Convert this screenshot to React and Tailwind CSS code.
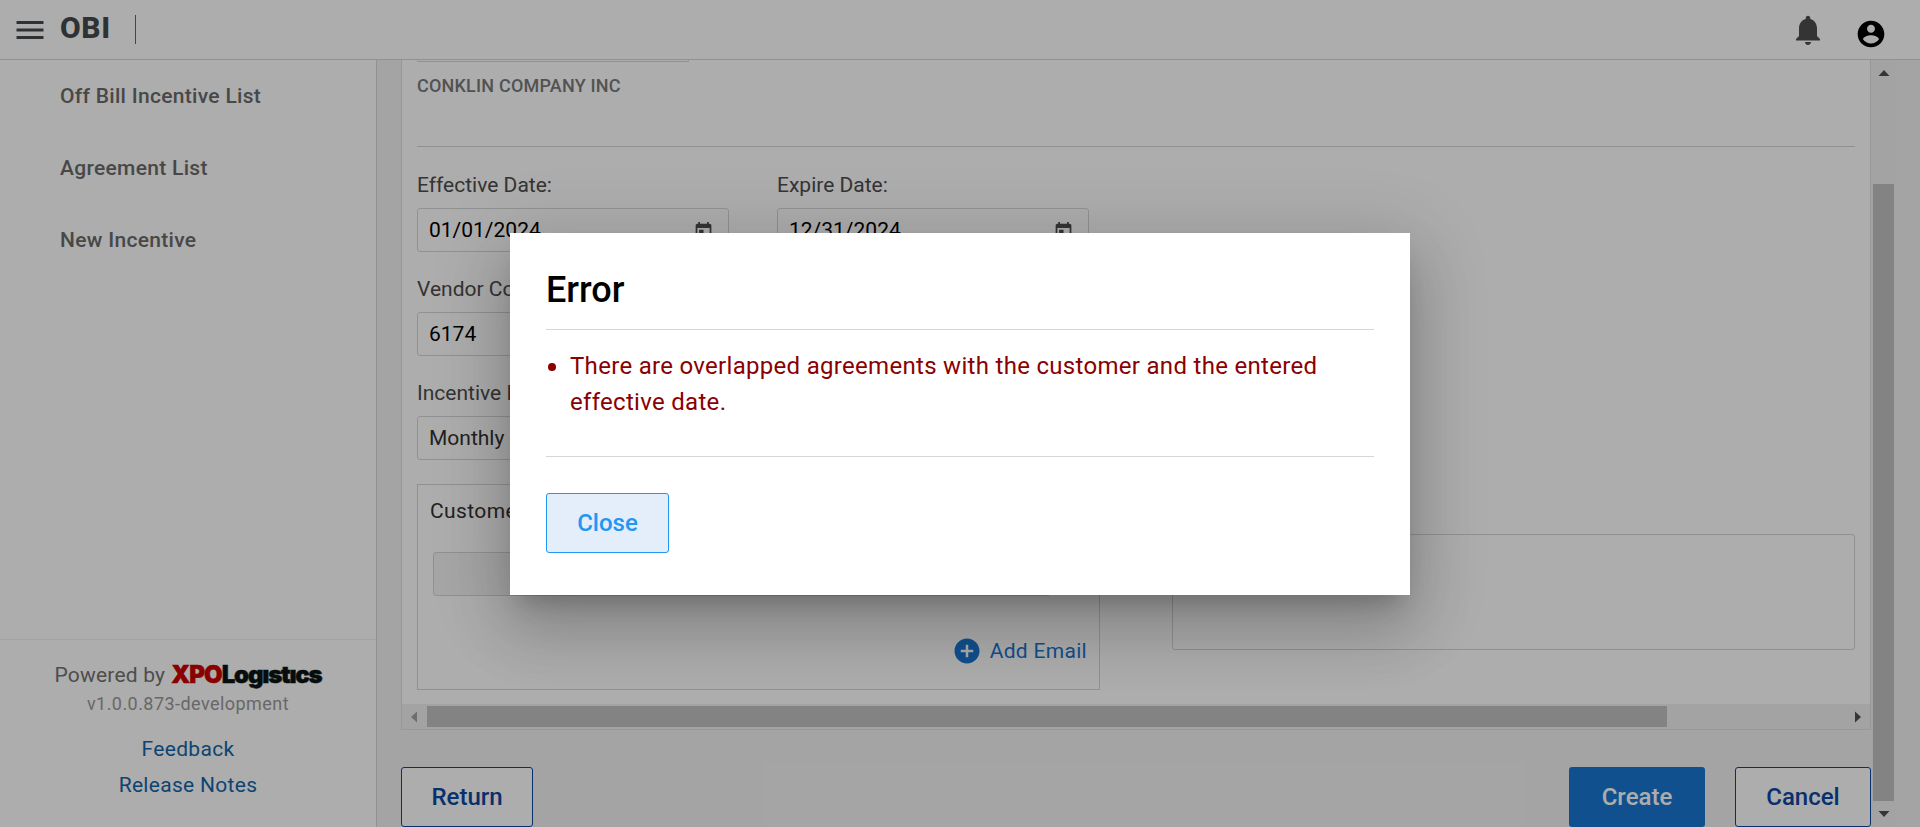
const ROBOTO = "font-['Roboto','Liberation_Sans',sans-serif]";

function Icon({ d, className }) {
  return (
    <svg viewBox="0 0 24 24" fill="currentColor" className={className}>
      <path d={d} />
    </svg>
  );
}

const MENU = "M3 18h18v-2H3v2zm0-5h18v-2H3v2zm0-7v2h18V6H3z";
const BELL =
  "M12 22c1.1 0 2-.9 2-2h-4c0 1.1.89 2 2 2zm6-6v-5c0-3.07-1.64-5.64-4.5-6.32V4c0-.83-.67-1.5-1.5-1.5s-1.5.67-1.5 1.5v.68C7.63 5.36 6 7.92 6 11v5l-2 2v1h16v-1l-2-2z";
const ACCOUNT =
  "M12 2C6.48 2 2 6.48 2 12s4.48 10 10 10 10-4.48 10-10S17.52 2 12 2zm0 3c1.66 0 3 1.34 3 3s-1.34 3-3 3-3-1.34-3-3 1.34-3 3-3zm0 14.2c-2.5 0-4.71-1.28-6-3.22.03-1.99 4-3.08 6-3.08 1.99 0 5.97 1.09 6 3.08-1.29 1.94-3.5 3.22-6 3.22z";
const TODAY =
  "M19 3h-1V1h-2v2H8V1H6v2H5c-1.11 0-1.99.9-1.99 2L3 19c0 1.1.89 2 2 2h14c1.1 0 2-.9 2-2V5c0-1.1-.9-2-2-2zm0 16H5V8h14v11zM7 10h5v5H7z";
const ADD =
  "M12 2C6.48 2 2 6.48 2 12s4.48 10 10 10 10-4.48 10-10S17.52 2 12 2zm5 11h-4v4h-2v-4H7v-2h4V7h2v4h4v2z";

function Field({ label, value, date, className = "", valueClass = "text-black" }) {
  return (
    <div className={`w-[312px] ${className}`}>
      <div className="h-[36px] pt-px text-[21px] leading-[24px] text-[#4d4d4d]">{label}</div>
      <div className="flex h-[44px] items-center justify-between rounded-[3px] border border-[#d6d6d6] pt-[2px] pr-[14px] pl-[11px] text-[21px]">
        <span className={valueClass}>{value}</span>
        {date && <Icon d={TODAY} className="size-[21px] text-[#4d4d4d]" />}
      </div>
    </div>
  );
}

function Header() {
  return (
    <header className="flex h-[60px] shrink-0 items-start border-b border-[#d6d6d6] bg-white">
      <Icon d={MENU} className="mt-[12px] ml-[12px] size-[36px] text-[#454b4d]" />
      <h1 className="mt-[10px] ml-[12px] w-[75px] text-[30px] leading-[36px] font-extrabold tracking-[0.6px] text-[#454b4d]">
        OBI
      </h1>
      <div className="mt-[15px] h-[29px] w-px bg-[#666]" />
      <div className="grow" />
      <Icon d={BELL} className="mt-[12px] size-[36px] text-[#4d4d4d]" />
      <Icon d={ACCOUNT} className="mt-[18px] mr-[33px] ml-[29px] size-[32px] text-black" />
    </header>
  );
}

function Sidebar() {
  return (
    <nav className="flex w-[377px] shrink-0 flex-col border-r border-[#d6d6d6] bg-white">
      <div className="flex grow flex-col pt-px pl-[60px] text-[21px] font-medium tracking-[0.3px] text-[#6b6b6b]">
        <div className="flex h-[72px] items-center">Off Bill Incentive List</div>
        <div className="flex h-[72px] items-center">Agreement List</div>
        <div className="flex h-[72px] items-center">New Incentive</div>
      </div>
      <div className="flex h-[188px] flex-col items-center border-t border-[#f0f0f0] pt-[19px]">
        <div className="flex h-[32px] items-center text-[21px] tracking-[0.2px] text-[#737373]">
          <span className="pt-px">Powered by</span>
          <span className="ml-[6px] flex font-['Inter',sans-serif] text-[24px] leading-[32px] font-black [-webkit-text-stroke:0.5px_currentColor]">
            <span className="tracking-[-0.9px] text-[#cc0000]">XPO</span>
            <span className="tracking-[-1.2px] text-[#0b1414]">Logıstıcs</span>
          </span>
        </div>
        <div className="mt-[1px] h-[24px] text-[18px] leading-[24px] tracking-[0.45px] text-[#9a9a9a]">
          v1.0.0.873-development
        </div>
        <a className="mt-[15px] h-[36px] text-[21px] leading-[36px] tracking-[0.3px] text-[#1565a8]">Feedback</a>
        <a className="h-[36px] text-[21px] leading-[36px] tracking-[0.3px] text-[#1565a8]">Release Notes</a>
      </div>
    </nav>
  );
}

function Form() {
  return (
    <div className="flex h-[644px] flex-col pr-[15px] pl-[15px]">
      <div className="h-[2px] w-[272px] shrink-0 rounded-b-[3px] border-x border-b border-[#d6d6d6]" />
      <div className="mt-[12px] h-[24px] shrink-0 text-[18px] leading-[24px] font-medium tracking-[0.2px] text-[#7a7a7a]">
        CONKLIN COMPANY INC
      </div>
      <div className="mt-[48px] h-px shrink-0 bg-[#d6d6d6]" />
      <div className="mt-[25px] flex h-[104px] shrink-0">
        <Field label="Effective Date:" value="01/01/2024" date />
        <Field label="Expire Date:" value="12/31/2024" date className="ml-[48px]" />
      </div>
      <div className="h-[104px] shrink-0">
        <Field label="Vendor Code:" value="6174" />
      </div>
      <div className="h-[104px] shrink-0">
        <Field label="Incentive Frequency:" value="Monthly" valueClass="text-[#333]" />
      </div>
      <div className="flex items-start justify-between">
        <div className="flex h-[206px] w-[683px] flex-col border border-[#d6d6d6]">
          <div className="mt-[14px] ml-[12px] h-[24px] text-[21px] leading-[24px] tracking-[0.4px] text-[#333]">
            Customer Emails:
          </div>
          <div className="mt-[29px] ml-[15px] h-[44px] w-[618px] rounded-[3px] border border-[#d6d6d6] bg-[#f5f5f5]" />
          <div className="mt-[40px] mr-[12px] flex h-[30px] items-center justify-end text-[21px] tracking-[0.3px] text-[#1976d2]">
            <Icon d={ADD} className="mr-[8px] size-[30px]" />
            <span className="pt-[2px]">Add Email</span>
          </div>
        </div>
        <div className="mt-[50px] h-[116px] w-[683px] rounded-[3px] border border-[#d6d6d6]" />
      </div>
    </div>
  );
}

function Arrow({ points, className }) {
  return (
    <svg viewBox="0 0 12 12" className={`size-[12px] ${className}`} fill="currentColor">
      <polygon points={points} />
    </svg>
  );
}

function Main() {
  return (
    <main className="flex grow bg-[#f2f2f2] pl-[24px]">
      <div className="flex w-[1470px] shrink-0 flex-col">
        <section className="h-[670px] shrink-0 border-x border-b border-[#dfdfdf] bg-white">
          <Form />
          <div className="flex h-[25px] items-center bg-[#f1f1f1] px-[6px]">
            <Arrow points="9,0.5 9,11.5 3,6" className="text-[#a3a3a3]" />
            <div className="ml-[7px] h-[21px] w-[1240px] bg-[#c1c1c1]" />
            <div className="grow" />
            <Arrow points="3,0.5 3,11.5 9,6" className="text-[#505050]" />
          </div>
        </section>
        <div className="mt-[37px] flex h-[60px] shrink-0 text-[24px] font-medium text-[#0d47a1]">
          <button className="w-[132px] rounded-[3px] border border-[#0d47a1] bg-white">Return</button>
          <div className="grow" />
          <button className="w-[136px] rounded-[3px] bg-[#1976d2] text-white">Create</button>
          <button className="ml-[30px] w-[136px] rounded-[3px] border border-[#0d47a1] bg-white">Cancel</button>
        </div>
      </div>
      <div className="flex w-[25px] flex-col items-center bg-[#f1f1f1]">
        <Arrow points="0.5,9 11.5,9 6,3" className="mt-[7px] text-[#505050]" />
        <div className="mt-[105px] h-[617px] w-[21px] bg-[#c1c1c1]" />
        <Arrow points="0.5,3 11.5,3 6,9" className="mt-[7px] text-[#505050]" />
      </div>
    </main>
  );
}

function ErrorDialog() {
  return (
    <div className="h-[362px] w-[900px] bg-white px-[36px] pt-[36px] shadow-[0_16px_22px_-10px_rgba(0,0,0,0.2),0_36px_57px_4px_rgba(0,0,0,0.14),0_14px_69px_12px_rgba(0,0,0,0.12)]">
      <h2 className="h-[60px] text-[36px] leading-[42px] font-medium text-black">Error</h2>
      <div className="flex h-[128px] border-y border-[#d6d6d6] pt-[18px] text-[24px] leading-[36px] tracking-[0.3px] text-[#8b0000]">
        <span className="mt-[15px] mr-[14px] ml-[2px] size-[8px] shrink-0 rounded-full bg-[#8b0000]" />
        <p className="w-[780px]">There are overlapped agreements with the customer and the entered effective date.</p>
      </div>
      <button className="mt-[36px] h-[60px] w-[123px] rounded-[3px] border border-[#2196f3] bg-[#e3eefa] text-[24px] font-medium text-[#2196f3]">
        Close
      </button>
    </div>
  );
}

export default function App() {
  return (
    <div className={`relative flex h-[827px] w-[1920px] flex-col overflow-hidden text-black ${ROBOTO}`}>
      <Header />
      <div className="flex h-[767px]">
        <Sidebar />
        <Main />
      </div>
      <div className="absolute inset-0 flex items-start justify-center bg-black/32 pt-[233px]">
        <ErrorDialog />
      </div>
    </div>
  );
}
